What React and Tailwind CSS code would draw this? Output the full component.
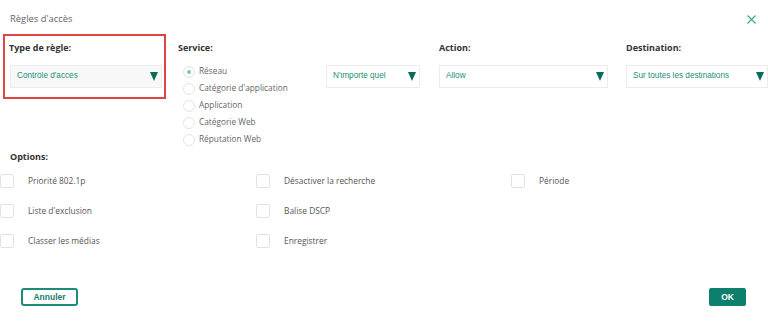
const services = [
  'Réseau',
  "Catégorie d'application",
  'Application',
  'Catégorie Web',
  'Réputation Web'
];

const options = [
  ['Priorité 802.1p', 'Désactiver la recherche', 'Période'],
  ["Liste d'exclusion", 'Balise DSCP', null],
  ['Classer les médias', 'Enregistrer', null]
];

function Arrow() {
  return (
    <svg width="8" height="9" viewBox="0 0 8 9" className="shrink-0">
      <path d="M0 0h8L4 9z" fill="#0c6b58" />
    </svg>
  );
}

function CloseIcon() {
  return (
    <svg width="9" height="9" viewBox="0 0 9 9" className="mt-[3px] mr-[2px]">
      <path d="M0.5 0.5l8 8M8.5 0.5l-8 8" stroke="#3aa38d" strokeWidth="1.1" fill="none" />
    </svg>
  );
}

function Select({ value, className = '', muted = false }) {
  return (
    <div
      className={`h-[23px] shrink-0 flex items-center justify-between pl-[6px] pr-[3px] border border-[#ececec] ${muted ? 'bg-[#f8f8f8]' : 'bg-white'} ${className}`}
    >
      <span className="text-[8.2px] leading-none text-[#1b8f79] font-['Liberation_Sans',Arial,sans-serif] truncate">
        {value}
      </span>
      <Arrow />
    </div>
  );
}

function Label({ children }) {
  return (
    <p className="text-[9px] leading-[14px] font-bold text-[#333]">
      {children}
    </p>
  );
}

function Checkbox({ label }) {
  return (
    <div className="flex items-center">
      <div className="w-[14px] h-[14px] border border-[#e2e2e2] rounded-[2px] bg-white shrink-0" />
      <span className="ml-[14px] text-[8.4px] text-[#555]">{label}</span>
    </div>
  );
}

export default function App() {
  return (
    <div className="w-[768px] h-[324px] bg-white overflow-hidden font-['Open_Sans',sans-serif] flex flex-col">
      <header className="h-[34px] flex items-start justify-between pl-[10px] pr-[10px] pt-[12px]">
        <h1 className="text-[9.4px] leading-[14px] text-[#666]">Règles d'accès</h1>
        <CloseIcon />
      </header>

      <div className="flex items-start">
        <div className="ml-[3px] w-[163px] h-[65px] border-2 border-[#e04545] pt-[5px] px-[4px]">
          <Label>Type de règle:</Label>
          <Select value="Contrôle d'accès" muted className="mt-[10px] w-[152px] ml-[1px]" />
        </div>

        <div className="ml-[12px] pt-[7px] w-[242px]">
          <Label>Service:</Label>
          <div className="flex items-start justify-between mt-[10px]">
            <div className="flex flex-col ml-[5px] -mt-[2px]">
              {services.map((s, i) => (
                <div key={s} className="h-[17px] flex items-center">
                  <div className="w-[12px] h-[12px] rounded-full border border-[#e4e4e4] bg-white flex items-center justify-center shrink-0">
                    {i === 0 && <div className="w-[4px] h-[4px] rounded-full bg-[#7cc9b7]" />}
                  </div>
                  <span className="ml-[4px] text-[8.3px] text-[#666]">{s}</span>
                </div>
              ))}
            </div>
            <Select value="N'importe quel" className="w-[94px]" />
          </div>
        </div>

        <div className="ml-[19px] pt-[7px]">
          <Label>Action:</Label>
          <Select value="Allow" className="mt-[10px] w-[169px]" />
        </div>

        <div className="ml-[18px] pt-[7px]">
          <Label>Destination:</Label>
          <Select value="Sur toutes les destinations" className="mt-[10px] w-[142px]" />
        </div>
      </div>

      <div className="pl-[10px] mt-[2px]">
        <Label>Options:</Label>
      </div>

      <div className="mt-[10px] flex flex-col gap-[16px]">
        {options.map((row, i) => (
          <div key={i} className="grid grid-cols-[256px_255px_1fr] h-[14px]">
            {row.map((o, j) =>
              o ? <Checkbox key={j} label={o} /> : <div key={j} />
            )}
          </div>
        ))}
      </div>

      <div className="mt-auto mb-[18px] flex items-center justify-between pl-[21px] pr-[22px]">
        <button className="w-[57px] h-[18px] border-2 border-[#1c8b7a] rounded-[3px] text-[8.5px] font-bold text-[#1c7d6f] font-['Liberation_Sans',Arial,sans-serif]">
          Annuler
        </button>
        <button className="w-[37px] h-[18px] bg-[#0d7f6d] rounded-[2px] text-[8.5px] font-bold text-white font-['Liberation_Sans',Arial,sans-serif]">
          OK
        </button>
      </div>
    </div>
  );
}
